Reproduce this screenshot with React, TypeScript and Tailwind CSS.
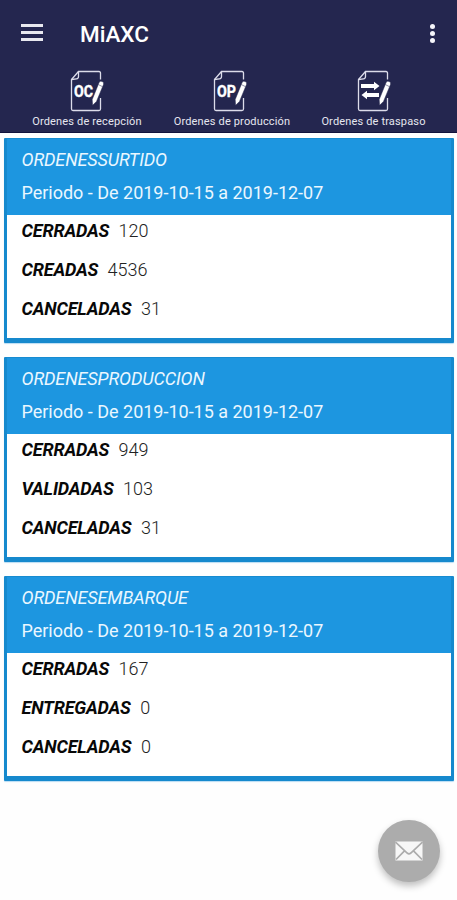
type Order = { title: string; rows: [string, string][] };

const orders: Order[] = [
  { title: 'ORDENESSURTIDO', rows: [['CERRADAS', '120'], ['CREADAS', '4536'], ['CANCELADAS', '31']] },
  { title: 'ORDENESPRODUCCION', rows: [['CERRADAS', '949'], ['VALIDADAS', '103'], ['CANCELADAS', '31']] },
  { title: 'ORDENESEMBARQUE', rows: [['CERRADAS', '167'], ['ENTREGADAS', '0'], ['CANCELADAS', '0']] },
];

function DocIcon({ label, shift }: { label?: string; shift: string }) {
  return (
    <svg width="36" height="44" viewBox="0 0 36 44" fill="none" className={`block ${shift}`}>
      <path d="M30.5 9.5V3Q30.5 1.5 29 1.5H8.5L1.5 9.5V39Q1.5 40.5 3 40.5H29Q30.5 40.5 30.5 39V28" stroke="#dcdcea" strokeWidth="1.3" />
      <path d="M8.5 1.5V6.5Q8.5 8.6 6.5 8.8L1.5 9.5" stroke="#dcdcea" strokeWidth="1.3" />
      {label ? (
        <text x="4" y="27" fill="#fff" stroke="#fff" strokeWidth=".4" fontFamily="Roboto, sans-serif" fontSize="17" fontWeight="700" textLength="19" lengthAdjust="spacingAndGlyphs">{label}</text>
      ) : (
        <path d="M4 14H17V11.8L22.5 16L17 20.2V18H4ZM22 27H10V29.2L4.5 25L10 20.8V23H22Z" fill="#fff" />
      )}
      <path d="M29.2 12.2Q30.4 10.5 32.2 11.5Q34.4 12.7 33.5 14.5L26.5 31.4L22.6 35.3L22.2 29.6Z" fill="#fff" stroke="#24264f" strokeWidth=".5" />
      <path d="M28.4 14.6L32.4 16.6" stroke="#24264f" strokeWidth=".5" />
    </svg>
  );
}

function Tab({ text, label, box, shift }: { text: string; label?: string; box: string; shift: string }) {
  return (
    <div className={`flex flex-col items-center ${box}`}>
      <DocIcon label={label} shift={shift} />
      <span className="mt-[1px] whitespace-nowrap text-[11px] leading-[14px] tracking-[0.16px] text-[#e6e6f0]">{text}</span>
    </div>
  );
}

export default function App() {
  return (
    <div className="relative h-[900px] w-[457px] overflow-hidden bg-[#fefefe] font-['Roboto',sans-serif]">
      <header className="h-[133px] border-b border-[#11123c] bg-[#24264f] text-white">
        <div className="flex h-[70px] items-center pl-[21px] pr-[22px]">
          <div className="mb-[6px] flex w-[22px] flex-col gap-[4px]">
            <span className="h-[3px] bg-[#e8e8ef]" />
            <span className="h-[3px] bg-[#e8e8ef]" />
            <span className="h-[3px] bg-[#e8e8ef]" />
          </div>
          <h1 className="mb-[3px] ml-[37px] text-[22.5px] font-medium leading-[28px]">MiAXC</h1>
          <div className="mb-[4px] ml-auto flex flex-col gap-[2px]">
            <span className="size-[5px] rounded-full bg-[#f5f5fa]" />
            <span className="size-[5px] rounded-full bg-[#f5f5fa]" />
            <span className="size-[5px] rounded-full bg-[#f5f5fa]" />
          </div>
        </div>
        <nav className="flex pl-[16px]">
          <Tab text="Ordenes de recepción" label="OC" box="w-[142px]" shift="ml-[2px]" />
          <Tab text="Ordenes de producción" label="OP" box="w-[148px]" shift="mr-[2px]" />
          <Tab text="Ordenes de traspaso" box="w-[135px]" shift="ml-[3px]" />
        </nav>
      </header>
      <main className="flex flex-col gap-[14px] pl-[4px] pr-[3px] pt-[5px]">
        {orders.map((o) => (
          <section key={o.title} className="h-[205px] rounded-[1px] border-x-[3px] border-b-[5px] border-[#1689cd] bg-white shadow-[0_1px_1px_#b9dcf3]">
            <div className="h-[77px] border-t border-[#168bd0] bg-[#1d96e0] pl-[14.5px] pt-[10px] text-[18px] leading-[22px] text-[#eaf7ff]">
              <div className="italic tracking-[-0.13px]">{o.title}</div>
              <div className="mt-[11px] tracking-[-0.01px]">Periodo - De 2019-10-15 a 2019-12-07</div>
            </div>
            <div className="flex flex-col gap-[17px] pl-[14.5px] pt-[5px] text-[18px] leading-[22px]">
              {o.rows.map(([name, value]) => (
                <div key={name} className="flex gap-[9.5px]">
                  <span className="font-bold italic tracking-[-0.18px] text-[#080808]">{name}</span>
                  <span className="font-light text-[#222]">{value}</span>
                </div>
              ))}
            </div>
          </section>
        ))}
      </main>
      <button className="absolute left-[378px] top-[820px] flex size-[62px] items-center justify-center rounded-full bg-[#acacac] shadow-[0_4px_7px_rgba(0,0,0,0.25)]">
        <svg width="28" height="20" viewBox="0 0 28 20" fill="none">
          <rect x=".5" y=".5" width="27" height="19" fill="#f7f7f7" />
          <path d="M.5 1L12.2 12Q14 13.6 15.8 12L27.5 1M1 18.5L9.5 9.8M27 18.5L18.5 9.8" stroke="#acacac" strokeWidth="1.7" />
        </svg>
      </button>
    </div>
  );
}
